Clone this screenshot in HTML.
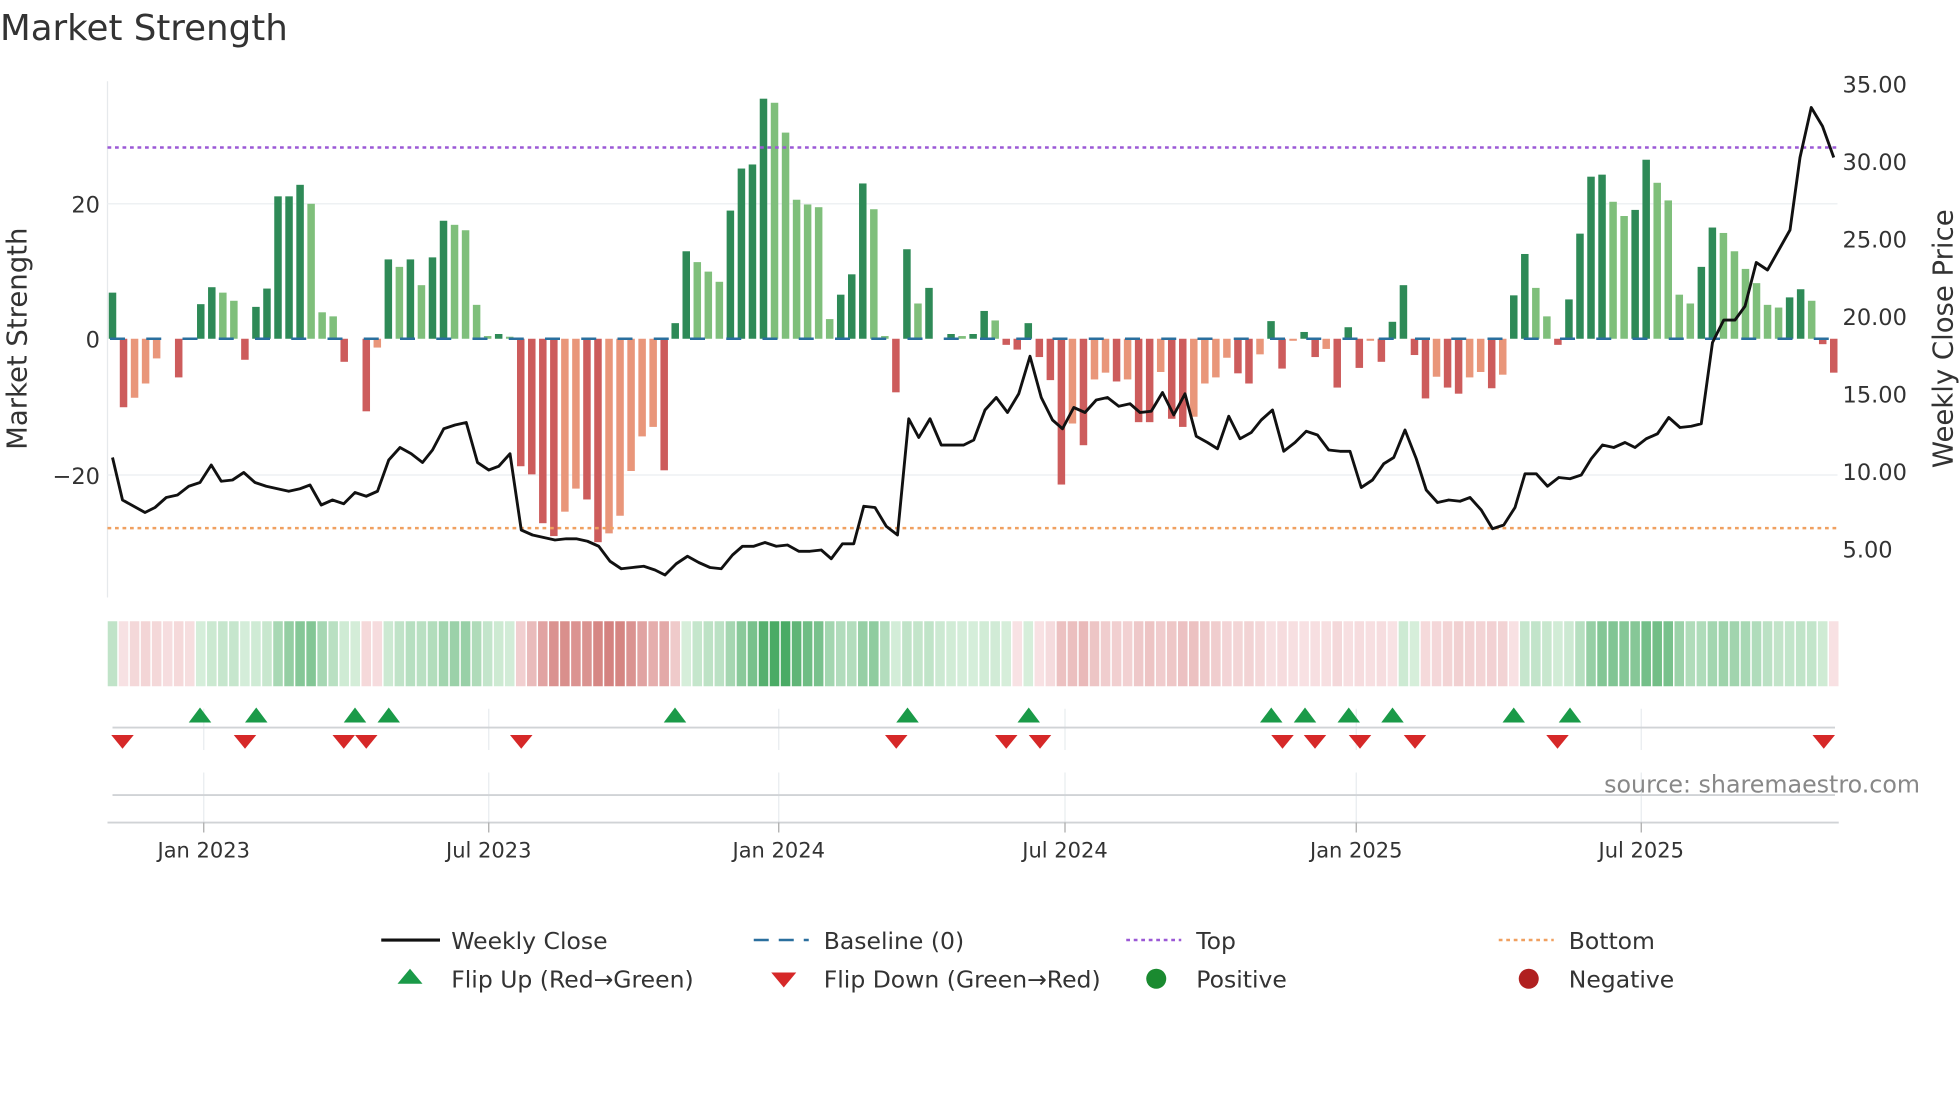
<!DOCTYPE html>
<html><head><meta charset="utf-8"><style>
html,body{margin:0;padding:0;background:#fff;width:1960px;height:1102px;overflow:hidden}
svg{display:block;font-family:"DejaVu Sans","Liberation Sans",sans-serif}
</style></head><body>
<svg id="s" width="1960" height="1102" viewBox="0 0 1568 881.6" xmlns="http://www.w3.org/2000/svg">
<rect width="1568" height="882" fill="#fff"/>
<text x="0" y="32" font-size="28.5" fill="#333">Market Strength</text>
<line x1="86" y1="65" x2="86" y2="478" stroke="#e6e9ec" stroke-width="1"/>
<line x1="86" y1="163" x2="1470" y2="163" stroke="#eef1f3" stroke-width="1.2"/>
<line x1="86" y1="380" x2="1470" y2="380" stroke="#eef1f3" stroke-width="1.2"/>
<g id="bars"></g>
<line x1="86" y1="118" x2="1470" y2="118" stroke="#9b59d6" stroke-width="2" stroke-dasharray="3,3"/>
<line x1="86" y1="422.5" x2="1470" y2="422.5" stroke="#f0a060" stroke-width="2" stroke-dasharray="3,3"/>
<line x1="88" y1="271" x2="1470" y2="271" stroke="#2a6f9e" stroke-width="2" stroke-dasharray="12,17"/>
<polyline id="price" fill="none" stroke="#111" stroke-width="2.3" stroke-linejoin="round"/>
<g font-size="18" fill="#333">
<text x="80" y="170" text-anchor="end">20</text>
<text x="80" y="278" text-anchor="end">0</text>
<text x="80" y="387" text-anchor="end">−20</text>
<text x="1474" y="74">35.00</text>
<text x="1474" y="136">30.00</text>
<text x="1474" y="198">25.00</text>
<text x="1474" y="260">20.00</text>
<text x="1474" y="322">15.00</text>
<text x="1474" y="384">10.00</text>
<text x="1474" y="446">5.00</text>
</g>
<text transform="translate(21,271) rotate(-90)" font-size="22" fill="#333" text-anchor="middle">Market Strength</text>
<text transform="translate(1562,271) rotate(-90)" font-size="22" fill="#333" text-anchor="middle">Weekly Close Price</text>
<g id="strip"></g>
<g stroke="#e8ecef" stroke-width="1">
<line x1="163" y1="567" x2="163" y2="600"/><line x1="391" y1="567" x2="391" y2="600"/><line x1="623" y1="567" x2="623" y2="600"/><line x1="852" y1="567" x2="852" y2="600"/><line x1="1085" y1="567" x2="1085" y2="600"/><line x1="1313" y1="567" x2="1313" y2="600"/>
<line x1="163" y1="618" x2="163" y2="658"/><line x1="391" y1="618" x2="391" y2="658"/><line x1="623" y1="618" x2="623" y2="658"/><line x1="852" y1="618" x2="852" y2="658"/><line x1="1085" y1="618" x2="1085" y2="658"/><line x1="1313" y1="618" x2="1313" y2="658"/>
</g>
<line x1="90" y1="582" x2="1468" y2="582" stroke="#d0d3d6" stroke-width="1.5"/>
<line x1="90" y1="636" x2="1468" y2="636" stroke="#d0d3d6" stroke-width="1.5"/>
<line x1="86" y1="658" x2="1471" y2="658" stroke="#d0d3d6" stroke-width="1.5"/>
<g stroke="#aaa" stroke-width="1">
<line x1="163" y1="658" x2="163" y2="666"/><line x1="391" y1="658" x2="391" y2="666"/><line x1="623" y1="658" x2="623" y2="666"/><line x1="852" y1="658" x2="852" y2="666"/><line x1="1085" y1="658" x2="1085" y2="666"/><line x1="1313" y1="658" x2="1313" y2="666"/>
</g>
<g id="marks"></g>
<text x="1536" y="634" font-size="19" fill="#888" text-anchor="end">source: sharemaestro.com</text>
<g font-size="16.8" fill="#333" text-anchor="middle">
<text x="163" y="686">Jan 2023</text><text x="391" y="686">Jul 2023</text><text x="623" y="686">Jan 2024</text><text x="852" y="686">Jul 2024</text><text x="1085" y="686">Jan 2025</text><text x="1313" y="686">Jul 2025</text>
</g>
<g font-size="18.8" fill="#333">
<line x1="305" y1="752" x2="352" y2="752" stroke="#111" stroke-width="2.5"/>
<text x="361" y="759">Weekly Close</text>
<line x1="603" y1="752" x2="647" y2="752" stroke="#2a6f9e" stroke-width="2" stroke-dasharray="12,8"/>
<text x="659" y="759">Baseline (0)</text>
<line x1="901" y1="752" x2="945" y2="752" stroke="#9b59d6" stroke-width="2" stroke-dasharray="3,3"/>
<text x="957" y="759">Top</text>
<line x1="1199" y1="752" x2="1243" y2="752" stroke="#f0a060" stroke-width="2" stroke-dasharray="3,3"/>
<text x="1255" y="759">Bottom</text>
<polygon points="318,787 338,787 328,775" fill="#1a9a48"/>
<text x="361" y="790">Flip Up (Red→Green)</text>
<polygon points="617,778 637,778 627,790" fill="#d62828"/>
<text x="659" y="790">Flip Down (Green→Red)</text>
<circle cx="925" cy="783" r="8" fill="#1a8a30"/>
<text x="957" y="790">Positive</text>
<circle cx="1223" cy="783" r="8" fill="#b02020"/>
<text x="1255" y="790">Negative</text>
</g>
</svg>
<script>
var V=[6.8,-10.1,-8.7,-6.6,-2.9,0,-5.7,0,5.1,7.6,6.8,5.6,-3.1,4.7,7.4,21,21,22.7,19.9,3.9,3.3,-3.4,0,-10.7,-1.3,11.7,10.6,11.7,7.9,12,17.4,16.8,16,5,0.4,0.7,0.3,-18.8,-20,-27.2,-29.1,-25.5,-22.1,-23.7,-30,-28.7,-26.1,-19.5,-14.4,-13,-19.4,2.3,12.9,11.3,9.9,8.4,18.9,25.1,25.7,35.4,34.8,30.4,20.5,19.8,19.4,2.9,6.5,9.5,22.9,19.1,0.4,-7.9,13.2,5.2,7.5,0,0.7,0.4,0.7,4.1,2.7,-0.9,-1.6,2.3,-2.7,-6.1,-21.5,-12.5,-15.7,-6,-5,-6.3,-6,-12.3,-12.3,-4.9,-11.8,-13,-11.5,-6.6,-5.7,-2.8,-5.1,-6.6,-2.3,2.6,-4.4,-0.3,1,-2.7,-1.5,-7.2,1.7,-4.3,-0.3,-3.4,2.5,7.9,-2.4,-8.8,-5.6,-7.2,-8.1,-5.7,-4.9,-7.3,-5.3,6.4,12.5,7.5,3.3,-0.9,5.8,15.5,23.9,24.2,20.2,18.1,19,26.4,23,20.4,6.5,5.2,10.6,16.4,15.6,12.9,10.3,8.2,5,4.6,6.1,7.3,5.6,-0.8,-5];
var NS="http://www.w3.org/2000/svg";
function el(t,a,p){var e=document.createElementNS(NS,t);for(var k in a)e.setAttribute(k,a[k]);p.appendChild(e);return e;}
var bars=document.getElementById('bars'),strip=document.getElementById('strip');
var x0=90,dx=(1467-90)/(V.length-1),k=5.425;
var ema=0;
function mix(a,b,t){return 'rgb('+[0,1,2].map(function(i){return Math.round(a[i]+(b[i]-a[i])*t)}).join(',')+')';}
for(var i=0;i<V.length;i++){
 var v=V[i],x=x0+i*dx,prev=i>0?V[i-1]:0,c;
 if(v>=0){c=(v>=prev)?'#2e8a57':'#7fbf7b';}else{c=(v<=prev)?'#cd5c5c':'#e9967a';}
 var h=Math.abs(v)*k;if(h<0.8&&v!=0)h=1.5;
 if(v!=0) el('rect',{x:x-3,y:v>0?271-h:271,width:6,height:h,fill:c},bars);
 ema=i==0?v:ema*0.55+v*0.45;
 var t=Math.min(1,Math.abs(ema)/30),col;
 t=Math.pow(t,1.2)*0.9;
 if(ema>=0)col=mix([216,239,220],[58,163,88],t);else col=mix([248,226,228],[204,108,104],t);
 el('rect',{x:x-dx/2+0.6,y:497,width:dx-1.2,height:52,fill:col},strip);
}
var P=[[90,366],[98,400],[107,405],[116,410],[124,406],[133,398],[142,396],[151,389],[160,386],[169,372],[177,385],[186,384],[195,378],[204,386],[213,389],[222,391],[231,393],[240,391],[248,388],[257,404],[266,400],[275,403],[284,394],[293,397],[302,393],[311,368],[320,358],[329,363],[338,370],[346,360],[355,343],[364,340],[373,338],[382,370],[391,376],[399,373],[408,363],[417,424],[426,428],[435,430],[444,432],[453,431],[461,431],[470,433],[479,437],[488,449],[497,455],[506,454],[515,453],[524,456],[532,460],[541,451],[550,445],[559,450],[568,454],[577,455],[586,444],[594,437],[603,437],[612,434],[621,437],[630,436],[639,441],[648,441],[657,440],[665,447],[674,435],[683,435],[691,405],[700,406],[709,421],[718,428],[727,335],[735,350],[744,335],[753,356],[762,356],[771,356],[779,352],[788,328],[797,318],[806,330],[815,315],[824,285],[833,318],[842,336],[850,343],[859,326],[868,330],[877,320],[886,318],[895,325],[904,323],[912,330],[921,329],[930,314],[939,332],[948,315],[957,349],[966,354],[974,359],[983,333],[992,351],[1001,346],[1009,336],[1018,328],[1027,361],[1036,354],[1045,345],[1054,348],[1063,360],[1072,361],[1080,361],[1089,390],[1098,384],[1107,371],[1115,366],[1124,344],[1133,367],[1141,392],[1150,402],[1159,400],[1168,401],[1176,398],[1185,408],[1194,423],[1203,420],[1212,406],[1220,379],[1229,379],[1238,389],[1247,382],[1256,383],[1265,380],[1273,367],[1282,356],[1291,358],[1300,354],[1308,358],[1317,351],[1326,347],[1335,334],[1344,342],[1353,341],[1361,339],[1370,274],[1379,256],[1388,256],[1396,245],[1405,210],[1414,216],[1423,200],[1432,184],[1440,126],[1449,86],[1458,101],[1467,126]];
document.getElementById('price').setAttribute('points',P.map(function(p){return p.join(',')}).join(' '));
var marks=document.getElementById('marks');
[160,205,284,311,540,726,823,1017,1044,1079,1114,1211,1256].forEach(function(x){el('polygon',{points:(x-9)+',578 '+(x+9)+',578 '+x+',566',fill:'#1a9a48'},marks);});
[98,196,275,293,417,717,805,832,1026,1052,1088,1132,1246,1459].forEach(function(x){el('polygon',{points:(x-9)+',588 '+(x+9)+',588 '+x+',599',fill:'#d62828'},marks);});
</script>
</body></html>
